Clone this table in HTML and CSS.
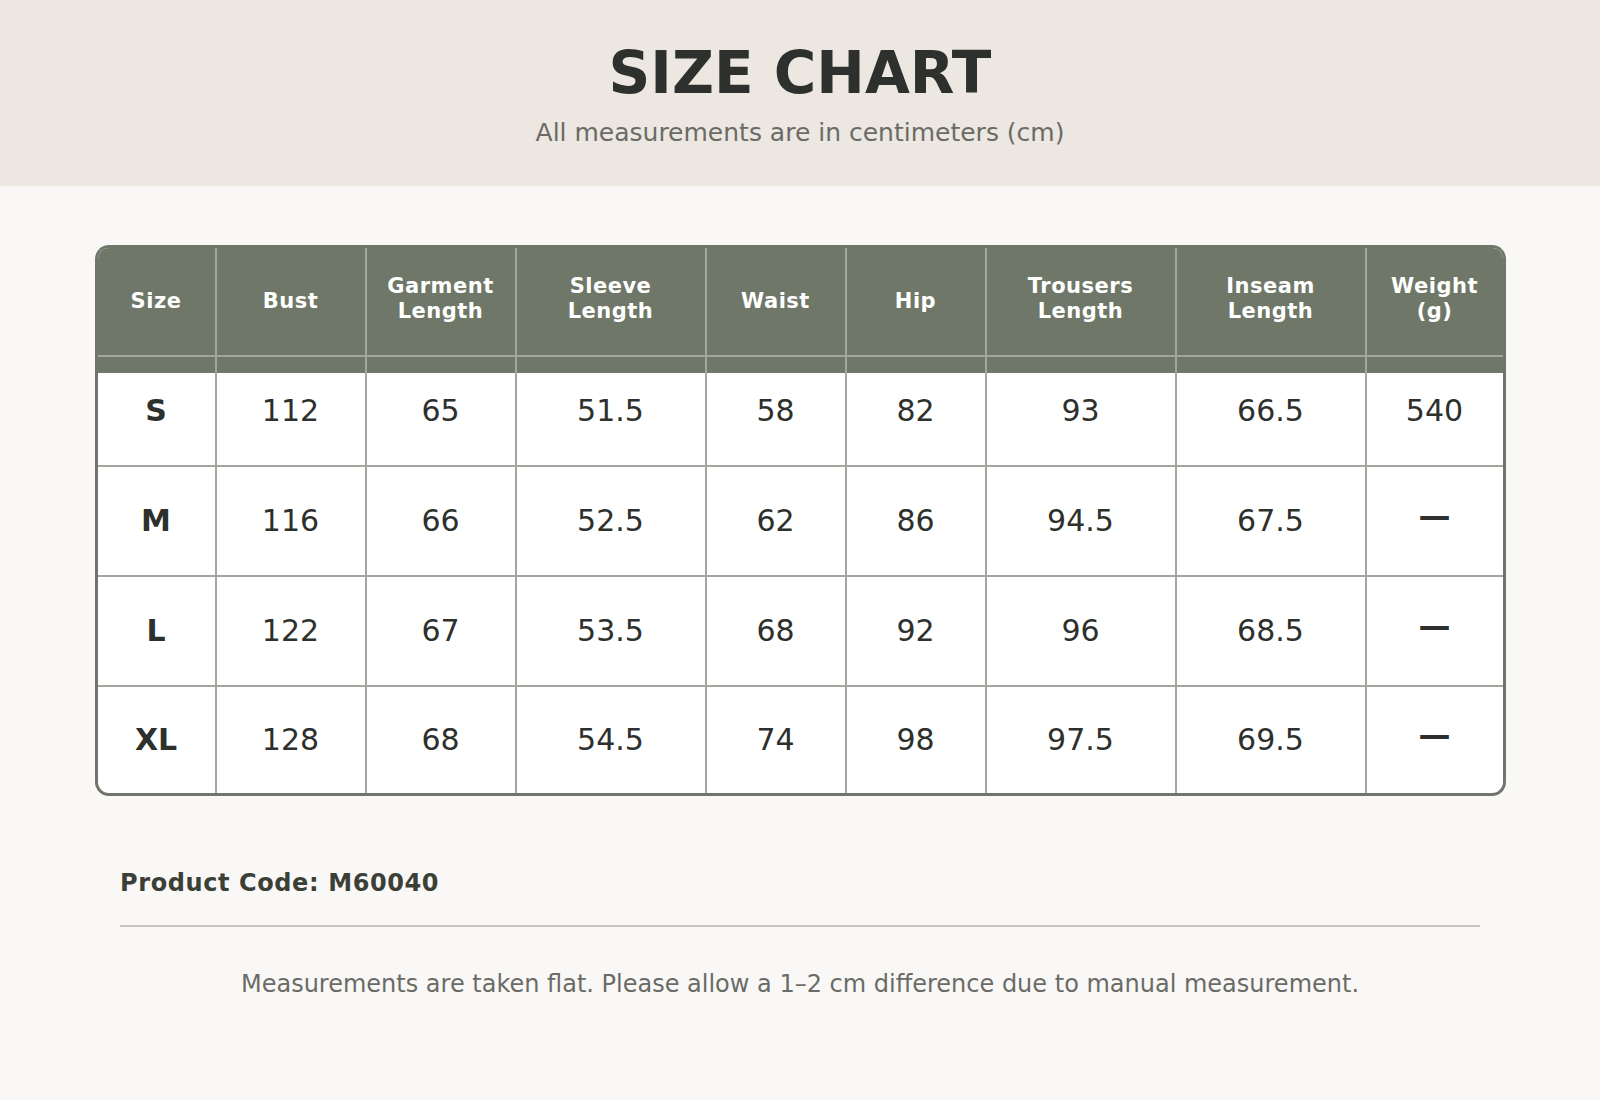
FILE: index.html
```html
<!DOCTYPE html>
<html lang="en">
<head>
<meta charset="utf-8">
<title>Size Chart</title>
<link rel="stylesheet" href="styles.css">
</head>
<body>
<header class="hero">
  <h1 class="hero-title">SIZE CHART</h1>
  <p class="hero-sub">All measurements are in centimeters (cm)</p>
</header>
<main class="content">
  <div class="chart">
    <table class="chart-table">
      <colgroup>
        <col class="c-size"><col class="c-150"><col class="c-150"><col class="c-190"><col class="c-140"><col class="c-140"><col class="c-190"><col class="c-190"><col class="c-last">
      </colgroup>
      <thead>
        <tr>
          <th>Size</th>
          <th>Bust</th>
          <th class="two">Garment<br>Length</th>
          <th class="two">Sleeve<br>Length</th>
          <th>Waist</th>
          <th>Hip</th>
          <th class="two">Trousers<br>Length</th>
          <th class="two">Inseam<br>Length</th>
          <th class="two">Weight<br>(g)</th>
        </tr>
      </thead>
      <tbody>
        <tr class="first">
          <td class="size">S</td><td>112</td><td>65</td><td>51.5</td><td>58</td><td>82</td><td>93</td><td>66.5</td><td>540</td>
        </tr>
        <tr>
          <td class="size">M</td><td>116</td><td>66</td><td>52.5</td><td>62</td><td>86</td><td>94.5</td><td>67.5</td><td><span class="dash">—</span></td>
        </tr>
        <tr>
          <td class="size">L</td><td>122</td><td>67</td><td>53.5</td><td>68</td><td>92</td><td>96</td><td>68.5</td><td><span class="dash">—</span></td>
        </tr>
        <tr class="last">
          <td class="size">XL</td><td>128</td><td>68</td><td>54.5</td><td>74</td><td>98</td><td>97.5</td><td>69.5</td><td><span class="dash">—</span></td>
        </tr>
      </tbody>
    </table>
  </div>
  <section class="info">
    <p class="code">Product Code: M60040</p>
    <hr class="divider">
    <p class="note">Measurements are taken flat. Please allow a 1–2 cm difference due to manual measurement.</p>
  </section>
</main>
</body>
</html>
```

FILE: styles.css
```css
* { box-sizing: border-box; }
html, body { margin: 0; padding: 0; }
body {
  background: #f9f8f6;
  font-family: "DejaVu Sans", "Liberation Sans", sans-serif;
  color: #2d302c;
  width: 1600px;
  min-height: 1100px;
}

.hero {
  height: 186px;
  background: #ece7e0;
  text-align: center;
  padding-top: 39px;
}
.hero-title {
  margin: 0;
  font-size: 58px;
  line-height: 68px;
  font-weight: bold;
  color: #2d302c;
}
.hero-sub {
  margin: 11px 0 0;
  font-size: 25px;
  line-height: 30px;
  color: #6b6b66;
}

.content {
  padding-top: 59px;
}

.chart {
  width: 1411px;
  margin: 0 auto;
  border: 3px solid #71766d;
  border-top-color: #6f7868;
  border-radius: 14px;
  overflow: hidden;
  background: #ffffff;
}
.chart-table {
  width: 100%;
  border-collapse: separate;
  border-spacing: 0;
  table-layout: fixed;
}
.c-size { width: 119px; }
.c-150 { width: 150px; }
.c-190 { width: 190px; }
.c-140 { width: 140px; }
.c-last { width: 136px; }

.chart-table th,
.chart-table td {
  padding: 0;
  text-align: center;
  vertical-align: middle;
  border-right: 2px solid #a3a69f;
  border-bottom: 2px solid #a3a69f;
}
.chart-table th:last-child,
.chart-table td:last-child { border-right: none; }

.chart-table th {
  height: 109px;
  background: #6f7868;
  color: #ffffff;
  font-size: 21px;
  line-height: 25px;
  font-weight: bold;
  letter-spacing: 0.5px;
}
.chart-table th.two {
  padding-bottom: 6px;
}
.chart-table td {
  height: 110px;
  font-size: 30px;
  line-height: 34px;
  color: #2d302c;
}
.chart-table td.size {
  font-weight: bold;
}
.chart-table tr.first td {
  box-shadow: inset 0 16px 0 #6f7868;
}
.chart-table tr.last td {
  height: 106px;
  border-bottom: none;
}
.dash {
  font-weight: bold;
  font-size: 32px;
  vertical-align: 9px;
}

.info {
  width: 1360px;
  margin: 0 auto;
  padding-top: 73px;
}
.code {
  margin: 0;
  font-size: 24px;
  line-height: 28px;
  font-weight: bold;
  letter-spacing: 0.6px;
  color: #3b4037;
}
.divider {
  margin: 28px 0 0;
  border: none;
  height: 2px;
  background: #c9c7c1;
}
.note {
  margin: 43px 0 0;
  text-align: center;
  font-size: 24px;
  line-height: 28px;
  color: #6b6b66;
}
```
